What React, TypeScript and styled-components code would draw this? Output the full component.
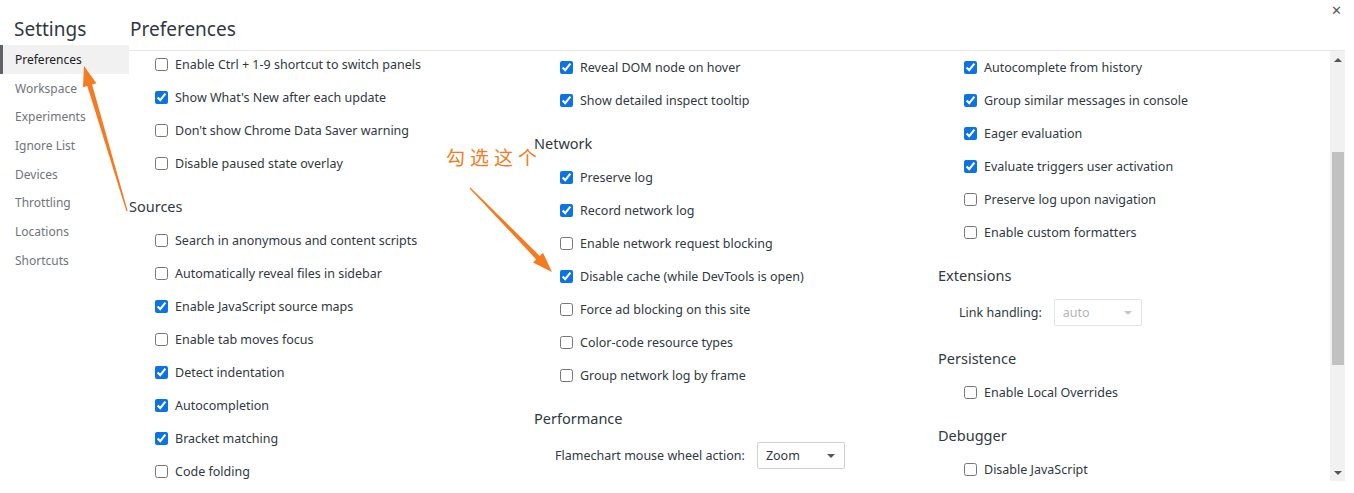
import { createGlobalStyle } from "styled-components";
import styled from "styled-components";

const GlobalStyle = createGlobalStyle`
	html, body {
		margin: 0;
		padding: 0;
		background: #ffffff;
	}
	body {
		font-family: "Noto Sans", "Open Sans", sans-serif;
		color: #303942;
	}
`;

const Page = styled.div`
	position: relative;
	display: flex;
	width: 1354px;
	height: 493px;
	overflow: hidden;
	background: #fff;
`;

const Sidebar = styled.nav`
	width: 129px;
	flex: none;
	display: flex;
	flex-direction: column;
`;

const SidebarTitle = styled.div`
	height: 45px;
	padding: 16px 0 0 14px;
	box-sizing: border-box;
	font-size: 19px;
	line-height: 26px;
	color: #303942;
`;

const NavItem = styled.div<{ $active?: boolean }>`
	height: 28.7px;
	display: flex;
	align-items: center;
	padding-left: 12px;
	font-size: 12px;
	color: ${(p) => (p.$active ? "#202124" : "#707479")};
	background: ${(p) => (p.$active ? "#f1f1f1" : "transparent")};
	border-left: 3px solid ${(p) => (p.$active ? "#5f6368" : "transparent")};
`;

const Main = styled.div`
	flex: 1;
	display: flex;
	flex-direction: column;
	min-width: 0;
`;

const Header = styled.header`
	height: 50px;
	flex: none;
	display: flex;
	align-items: flex-start;
	justify-content: space-between;
	border-bottom: 1px solid #e8e8e8;
	margin-right: 9px;
`;

const HeaderTitle = styled.div`
	padding: 16px 0 0 1px;
	font-size: 19px;
	line-height: 26px;
	color: #303942;
`;

const CloseButton = styled.div`
	margin: 2px 3px 0 0;
	font-size: 13px;
	line-height: 16px;
	color: #5a5a5a;
`;

const Body = styled.div`
	flex: none;
	height: 430px;
	display: flex;
	overflow: hidden;
	margin-right: 9px;
`;

const Columns = styled.div`
	flex: 1;
	display: flex;
	overflow: hidden;
`;

const Column = styled.div<{ $width?: number; $shift?: number }>`
	flex: ${(p) => (p.$width ? "none" : "1")};
	width: ${(p) => (p.$width ? `${p.$width}px` : "auto")};
	margin-top: ${(p) => p.$shift ?? 0}px;
	display: flex;
	flex-direction: column;
`;

const SectionTitle = styled.div`
	padding: 16px 0 7px 0;
	height: 21px;
	font-size: 14.5px;
	line-height: 21px;
	color: #303942;
`;

const CheckRow = styled.label`
	height: 33px;
	flex: none;
	display: flex;
	align-items: center;
	padding-left: 26px;
	font-size: 12.5px;
	color: #303942;
	white-space: nowrap;
`;

const Check = styled.input.attrs({ type: "checkbox" })`
	width: 13px;
	height: 13px;
	margin: 0 7px 0 0;
	accent-color: #0b72e7;
`;

const SelectRow = styled.div`
	height: 39px;
	flex: none;
	display: flex;
	align-items: center;
	padding-left: 21px;
	font-size: 12.5px;
	color: #303942;
	white-space: nowrap;
`;

const SelectLabel = styled.span`
	margin-right: 12px;
`;

const SelectBox = styled.div<{ $disabled?: boolean }>`
	width: 88px;
	height: 27px;
	box-sizing: border-box;
	display: flex;
	align-items: center;
	justify-content: space-between;
	padding: 0 9px 0 8px;
	border: 1px solid ${(p) => (p.$disabled ? "#e4e4e4" : "#d0d0d0")};
	border-radius: 2px;
	font-size: 12.5px;
	color: ${(p) => (p.$disabled ? "#b4b4b4" : "#303942")};
	background: #fff;
`;

const Caret = styled.span<{ $disabled?: boolean }>`
	width: 0;
	height: 0;
	border-left: 4px solid transparent;
	border-right: 4px solid transparent;
	border-top: 4px solid ${(p) => (p.$disabled ? "#c4c4c4" : "#555")};
`;

const Scrollbar = styled.div`
	width: 15px;
	flex: none;
	background: #f1f1f1;
	display: flex;
	flex-direction: column;
	align-items: center;
`;

const ScrollArrow = styled.div<{ $down?: boolean }>`
	height: 17px;
	flex: none;
	display: flex;
	align-items: center;
	justify-content: center;
	&::after {
		content: "";
		border-left: 4px solid transparent;
		border-right: 4px solid transparent;
		${(p) =>
			p.$down
				? "border-top: 4px solid #555;"
				: "border-bottom: 4px solid #555;"}
	}
`;

const ScrollTrack = styled.div`
	flex: 1;
	width: 100%;
	display: flex;
	flex-direction: column;
	align-items: center;
	padding-top: 84px;
	box-sizing: border-box;
`;

const ScrollThumb = styled.div`
	width: 12px;
	height: 213px;
	background: #c1c1c1;
`;

const Annotation = styled.svg`
	position: absolute;
	left: 0;
	top: 0;
	width: 1354px;
	height: 493px;
	pointer-events: none;
	overflow: visible;
`;

const Note = styled.div`
	position: absolute;
	left: 446px;
	top: 144px;
	font-family: "Noto Sans CJK SC", sans-serif;
	font-size: 19px;
	line-height: 26px;
	letter-spacing: 5px;
	color: #f47b20;
	pointer-events: none;
`;

type Item =
	| { kind: "check"; label: string; checked?: boolean }
	| { kind: "title"; label: string }
	| { kind: "select"; label: string; value: string; disabled?: boolean };

const col1: Item[] = [
	{ kind: "check", label: "Enable Ctrl + 1-9 shortcut to switch panels" },
	{ kind: "check", label: "Show What's New after each update", checked: true },
	{ kind: "check", label: "Don't show Chrome Data Saver warning" },
	{ kind: "check", label: "Disable paused state overlay" },
	{ kind: "title", label: "Sources" },
	{ kind: "check", label: "Search in anonymous and content scripts" },
	{ kind: "check", label: "Automatically reveal files in sidebar" },
	{ kind: "check", label: "Enable JavaScript source maps", checked: true },
	{ kind: "check", label: "Enable tab moves focus" },
	{ kind: "check", label: "Detect indentation", checked: true },
	{ kind: "check", label: "Autocompletion", checked: true },
	{ kind: "check", label: "Bracket matching", checked: true },
	{ kind: "check", label: "Code folding" },
];

const col2: Item[] = [
	{ kind: "check", label: "Reveal DOM node on hover", checked: true },
	{ kind: "check", label: "Show detailed inspect tooltip", checked: true },
	{ kind: "title", label: "Network" },
	{ kind: "check", label: "Preserve log", checked: true },
	{ kind: "check", label: "Record network log", checked: true },
	{ kind: "check", label: "Enable network request blocking" },
	{ kind: "check", label: "Disable cache (while DevTools is open)", checked: true },
	{ kind: "check", label: "Force ad blocking on this site" },
	{ kind: "check", label: "Color-code resource types" },
	{ kind: "check", label: "Group network log by frame" },
	{ kind: "title", label: "Performance" },
	{ kind: "select", label: "Flamechart mouse wheel action:", value: "Zoom" },
];

const col3: Item[] = [
	{ kind: "check", label: "Autocomplete from history", checked: true },
	{ kind: "check", label: "Group similar messages in console", checked: true },
	{ kind: "check", label: "Eager evaluation", checked: true },
	{ kind: "check", label: "Evaluate triggers user activation", checked: true },
	{ kind: "check", label: "Preserve log upon navigation" },
	{ kind: "check", label: "Enable custom formatters" },
	{ kind: "title", label: "Extensions" },
	{ kind: "select", label: "Link handling:", value: "auto", disabled: true },
	{ kind: "title", label: "Persistence" },
	{ kind: "check", label: "Enable Local Overrides" },
	{ kind: "title", label: "Debugger" },
	{ kind: "check", label: "Disable JavaScript" },
];

const nav = [
	"Preferences",
	"Workspace",
	"Experiments",
	"Ignore List",
	"Devices",
	"Throttling",
	"Locations",
	"Shortcuts",
];

const renderItem = (item: Item, i: number) => {
	if (item.kind === "title") return <SectionTitle key={i}>{item.label}</SectionTitle>;
	if (item.kind === "select")
		return (
			<SelectRow key={i}>
				<SelectLabel>{item.label}</SelectLabel>
				<SelectBox $disabled={item.disabled}>
					{item.value}
					<Caret $disabled={item.disabled} />
				</SelectBox>
			</SelectRow>
		);
	return (
		<CheckRow key={i}>
			<Check defaultChecked={item.checked} />
			{item.label}
		</CheckRow>
	);
};

// tapered arrow: thin at the tail, wide head at the tip
const arrowPath = (x1: number, y1: number, x2: number, y2: number) => {
	const dx = x2 - x1;
	const dy = y2 - y1;
	const len = Math.hypot(dx, dy);
	const ux = dx / len;
	const uy = dy / len;
	const nx = -uy;
	const ny = ux;
	const headLen = 20;
	const bx = x2 - ux * headLen;
	const by = y2 - uy * headLen;
	const p = (x: number, y: number) => `${x.toFixed(1)},${y.toFixed(1)}`;
	return [
		p(x1 + nx * 0.6, y1 + ny * 0.6),
		p(bx + nx * 2.5, by + ny * 2.5),
		p(bx + nx * 7, by + ny * 7),
		p(x2, y2),
		p(bx - nx * 7, by - ny * 7),
		p(bx - nx * 2.5, by - ny * 2.5),
		p(x1 - nx * 0.6, y1 - ny * 0.6),
	].join(" ");
};

export default function App() {
	return (
		<Page>
			<GlobalStyle />
			<Sidebar>
				<SidebarTitle>Settings</SidebarTitle>
				{nav.map((n, i) => (
					<NavItem key={n} $active={i === 0}>
						{n}
					</NavItem>
				))}
			</Sidebar>
			<Main>
				<Header>
					<HeaderTitle>Preferences</HeaderTitle>
					<CloseButton>✕</CloseButton>
				</Header>
				<Body>
					<Columns>
						<Column $width={405} $shift={-3}>
							{col1.map(renderItem)}
						</Column>
						<Column $width={404}>{col2.map(renderItem)}</Column>
						<Column>{col3.map(renderItem)}</Column>
					</Columns>
					<Scrollbar>
						<ScrollArrow />
						<ScrollTrack>
							<ScrollThumb />
						</ScrollTrack>
						<ScrollArrow $down />
					</Scrollbar>
				</Body>
			</Main>
			<Annotation viewBox="0 0 1354 493">
				<polygon points={arrowPath(127, 211, 84, 66)} fill="#f47b20" />
				<polygon points={arrowPath(470, 188, 552, 272)} fill="#f47b20" />
			</Annotation>
			<Note>勾选这个</Note>
		</Page>
	);
}
